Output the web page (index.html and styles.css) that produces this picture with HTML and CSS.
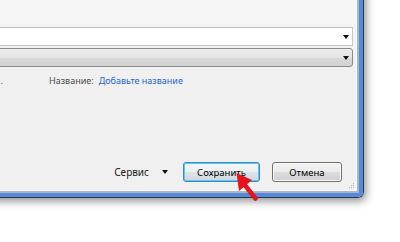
FILE: index.html
```html
<!DOCTYPE html>
<html lang="ru">
<head>
    <meta charset="UTF-8">
    <title>Сохранение</title>
    <link rel="stylesheet" href="styles.css">
</head>
<body>

<div class="window">
    <div class="frame">
        <div class="client">
            <div class="dialog">

                <!-- file name / type fields -->
                <div class="fields">
                    <div class="combo combo-edit"><span class="drop"></span></div>
                    <div class="combo combo-list"><span class="drop"></span></div>
                </div>

                <!-- details row -->
                <div class="meta">
                    <span class="cut-link">.</span>
                    <span class="meta-label">Название:</span>
                    <a class="meta-link">Добавьте название</a>
                </div>

                <!-- buttons -->
                <div class="actions">
                    <span class="tools">Сервис</span>
                    <span class="tools-arrow"></span>
                    <button class="btn btn-default">Сохранить</button>
                    <button class="btn">Отмена</button>
                </div>

                <svg class="grip" width="7" height="7" viewBox="0 0 7 7">
                    <rect x="5" y="1" width="1" height="1" fill="#b5b5b5"/>
                    <rect x="3" y="3" width="1" height="1" fill="#b5b5b5"/>
                    <rect x="5" y="3" width="1" height="1" fill="#b5b5b5"/>
                    <rect x="1" y="5" width="1" height="1" fill="#b5b5b5"/>
                    <rect x="3" y="5" width="1" height="1" fill="#b5b5b5"/>
                    <rect x="5" y="5" width="1" height="1" fill="#b5b5b5"/>
                    <rect x="6" y="2" width="1" height="1" fill="#fff"/>
                    <rect x="4" y="4" width="1" height="1" fill="#fff"/>
                    <rect x="6" y="4" width="1" height="1" fill="#fff"/>
                    <rect x="2" y="6" width="1" height="1" fill="#fff"/>
                    <rect x="4" y="6" width="1" height="1" fill="#fff"/>
                    <rect x="6" y="6" width="1" height="1" fill="#fff"/>
                </svg>
            </div>
        </div>
    </div>
</div>

<!-- red pointer over the save button -->
<svg class="pointer" width="400" height="242" viewBox="0 0 400 242">
    <line x1="244" y1="184" x2="255.5" y2="198.5" stroke="#e4141c" stroke-width="4.5" stroke-linecap="round"/>
    <polygon points="236.5,173 252,180 239,191" fill="#e4141c"/>
</svg>

</body>
</html>
```

FILE: styles.css
```css
body {
    margin: 0;
    width: 400px;
    height: 242px;
    overflow: hidden;
    position: relative;
    background-color: #fff;
    font-family: "Noto Sans", "Open Sans", sans-serif;
    font-size: 9px;
}
.window {
    margin: -20px 0 0 -20px;
    width: max-content;
    border-right: 1px solid #2e3848;
    border-bottom: 1px solid #2e3848;
    border-bottom-right-radius: 6px;
    box-shadow: 2px 3px 8px rgba(0, 0, 0, 0.45);
}
.frame {
    border-right: 4px solid #548ada;
    border-bottom: 4px solid #548ada;
    border-bottom-right-radius: 5px;
}
.client {
    border-right: 2px solid #a9b6c8;
    border-bottom: 2px solid #a9b6c8;
}
.dialog {
    position: relative;
    display: flex;
    flex-direction: column;
    width: 377px;
    height: 211px;
    box-sizing: border-box;
    background-color: #f0f0f0;
    border-right: 1px solid #fafafa;
    border-bottom: 1px solid #fafafa;
}
.fields {
    padding: 47px 3px 0 0;
    background: linear-gradient(#f8f8f8, #f2f2f2);
}
.combo {
    height: 19px;
    box-sizing: border-box;
    display: flex;
    justify-content: flex-end;
    align-items: center;
    padding-right: 3px;
}
.combo-edit {
    background-color: #fff;
    border: 1px solid #c9c9c9;
    border-top-color: #bcbcbc;
    margin-bottom: 2px;
}
.combo-list {
    border: 1px solid #8b8b8b;
    border-radius: 3px;
    background: linear-gradient(#ededed, #e4e4e4 50%, #d9d9d9 51%, #d2d2d2);
}
.drop, .tools-arrow {
    width: 0;
    height: 0;
    border-top: 4px solid #111;
    border-left: 3.5px solid transparent;
    border-right: 3.5px solid transparent;
}
.meta {
    display: flex;
    align-items: center;
    margin-top: 6px;
    padding-left: 20px;
    line-height: 15px;
}
.cut-link {
    width: 3px;
    overflow: hidden;
    color: #1f66cc;
    direction: rtl;
}
.meta-label {
    margin-left: 46px;
    color: #4d4d4d;
}
.meta-link {
    margin-left: 5px;
    color: #1f66cc;
}
.actions {
    margin-top: auto;
    padding: 0 14px 8px 0;
    display: flex;
    justify-content: flex-end;
    align-items: center;
}
.tools {
    color: #1a1a1a;
    font-size: 10px;
}
.tools-arrow {
    margin: 0 15px 0 13px;
}
.btn {
    height: 20px;
    padding: 0;
    font-family: inherit;
    font-size: 9.5px;
    color: #000;
    border: 1px solid #707070;
    border-radius: 3px;
    background: linear-gradient(#f2f2f2, #ebebeb 50%, #dddddd 51%, #cfcfcf);
    box-shadow: inset 0 0 0 1px #fbfbfb;
    width: 70px;
}
.btn-default {
    width: 77px;
    margin-right: 12px;
    border-color: #3c8bc4;
    box-shadow: inset 0 0 0 1px #58c6f2;
    background: linear-gradient(#f4f8fa, #eaeff2 50%, #dde4e8 51%, #d2d9de);
}
.grip {
    position: absolute;
    right: 1px;
    bottom: 1px;
}
.pointer {
    position: absolute;
    left: 0;
    top: 0;
    pointer-events: none;
}
```
